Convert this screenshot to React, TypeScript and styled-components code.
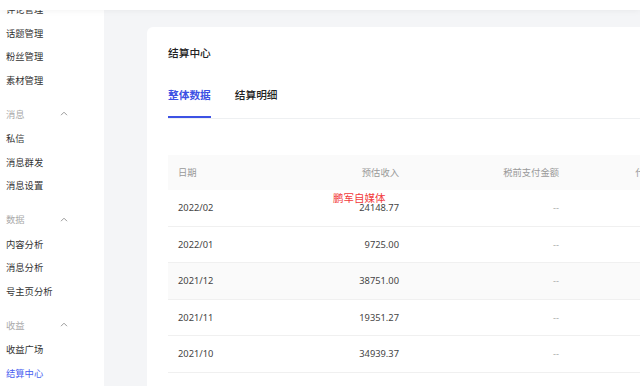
import { Fragment } from 'react';
import styled, { createGlobalStyle } from 'styled-components';

const GlobalStyle = createGlobalStyle`
	html, body {
		margin: 0;
		padding: 0;
		overflow: hidden;
		background: #f4f5f7;
	}
	body {
		font-family: 'Noto Sans', 'Noto Sans CJK SC', sans-serif;
		-webkit-font-smoothing: antialiased;
	}
`;

const Page = styled.div`
	display: flex;
	width: 640px;
	height: 386px;
	overflow: hidden;
`;

const TopBar = styled.div`
	position: fixed;
	top: 0;
	left: 0;
	right: 0;
	height: 10px;
	background: #fff;
	box-shadow: 0 1px 6px rgba(0, 0, 0, 0.05);
	z-index: 2;
`;

const Sidebar = styled.nav`
	width: 104px;
	flex-shrink: 0;
	background: #fff;
	overflow: hidden;
`;

const NavList = styled.div`
	display: flex;
	flex-direction: column;
	margin-top: -1.9px;
`;

const NavItem = styled.div<{ active?: boolean }>`
	height: 23.6px;
	line-height: 23.6px;
	padding-left: 6px;
	font-size: 9.3px;
	color: ${(props) => (props.active ? '#4a5ff0' : '#333')};
`;

const GroupTitle = styled.div`
	display: flex;
	align-items: center;
	justify-content: space-between;
	height: 26.4px;
	margin-top: 8.3px;
	padding: 0 36px 0 6px;
	font-size: 9.3px;
	color: #aaa;
`;

const Main = styled.main`
	flex: 1;
	padding: 27px 0 0 43px;
	overflow: hidden;
`;

const Card = styled.section`
	position: relative;
	width: 720px;
	height: 400px;
	padding: 18px 0 0 21px;
	background: #fff;
	border-radius: 6px;
	box-sizing: border-box;
`;

const Title = styled.h2`
	margin: 0;
	font-size: 10.7px;
	line-height: 16px;
	font-weight: 500;
	color: #222;
`;

const Tabs = styled.div`
	display: flex;
	gap: 24px;
	margin-top: 26px;
	border-bottom: 1px solid #eef0f2;
`;

const Tab = styled.div<{ active?: boolean }>`
	padding-bottom: 13px;
	font-size: 10.7px;
	line-height: 16px;
	font-weight: ${(props) => (props.active ? 700 : 500)};
	color: ${(props) => (props.active ? '#3d52e4' : '#222')};
	border-bottom: 2px solid ${(props) => (props.active ? '#3d52e4' : 'transparent')};
`;

const Table = styled.div`
	margin-top: 36px;
	display: grid;
	grid-template-columns: 81px 160px 160px 160px;
`;

const HeadCell = styled.div<{ align?: 'left' | 'right' }>`
	height: 35px;
	line-height: 35px;
	padding: 0 10px;
	background: #fafafa;
	font-size: 9.3px;
	color: #999;
	white-space: nowrap;
	text-align: ${(props) => props.align || 'left'};
`;

const Cell = styled.div<{ align?: 'left' | 'right'; striped?: boolean; muted?: boolean }>`
	height: 35.6px;
	line-height: 35.6px;
	padding: 0 10px;
	border-bottom: 1px solid #f0f0f0;
	background: ${(props) => (props.striped ? '#fafafa' : '#fff')};
	font-size: 9.3px;
	color: ${(props) => (props.muted ? '#aaa' : '#444')};
	white-space: nowrap;
	text-align: ${(props) => props.align || 'left'};
`;

const Watermark = styled.span`
	position: absolute;
	left: 186px;
	top: 163px;
	font-size: 10.5px;
	color: #f23a3a;
	white-space: nowrap;
	pointer-events: none;
`;

const Chevron = () => (
	<svg width="8" height="5" viewBox="0 0 8 5" fill="none">
		<path d="M1 4.2 4 1.2 7 4.2" stroke="#999" strokeWidth="1" />
	</svg>
);

const groups = [
	{ title: null, items: ['评论管理', '话题管理', '粉丝管理', '素材管理'] },
	{ title: '消息', items: ['私信', '消息群发', '消息设置'] },
	{ title: '数据', items: ['内容分析', '消息分析', '号主页分析'] },
	{ title: '收益', items: ['收益广场', '结算中心'] },
];

const rows = [
	{ date: '2022/02', income: '24148.77' },
	{ date: '2022/01', income: '9725.00' },
	{ date: '2021/12', income: '38751.00' },
	{ date: '2021/11', income: '19351.27' },
	{ date: '2021/10', income: '34939.37' },
];

export default function App() {
	return (
		<>
			<GlobalStyle />
			<TopBar />
			<Page>
				<Sidebar>
					<NavList>
						{groups.map((group, gi) => (
							<div key={gi}>
								{group.title && (
									<GroupTitle>
										<span>{group.title}</span>
										<Chevron />
									</GroupTitle>
								)}
								{group.items.map((item) => (
									<NavItem key={item} active={item === '结算中心'}>
										{item}
									</NavItem>
								))}
							</div>
						))}
					</NavList>
				</Sidebar>
				<Main>
					<Card>
						<Title>结算中心</Title>
						<Tabs>
							<Tab active>整体数据</Tab>
							<Tab>结算明细</Tab>
						</Tabs>
						<Table>
							<HeadCell>日期</HeadCell>
							<HeadCell align="right">预估收入</HeadCell>
							<HeadCell align="right">税前支付金额</HeadCell>
							<HeadCell align="right">代扣代缴个人所得税</HeadCell>
							{rows.map((row, i) => (
								<Fragment key={row.date}>
									<Cell striped={i === 2}>{row.date}</Cell>
									<Cell align="right" striped={i === 2}>{row.income}</Cell>
									<Cell align="right" striped={i === 2} muted>--</Cell>
									<Cell align="right" striped={i === 2} muted>--</Cell>
								</Fragment>
							))}
						</Table>
						<Watermark>鹏军自媒体</Watermark>
					</Card>
				</Main>
			</Page>
		</>
	);
}
